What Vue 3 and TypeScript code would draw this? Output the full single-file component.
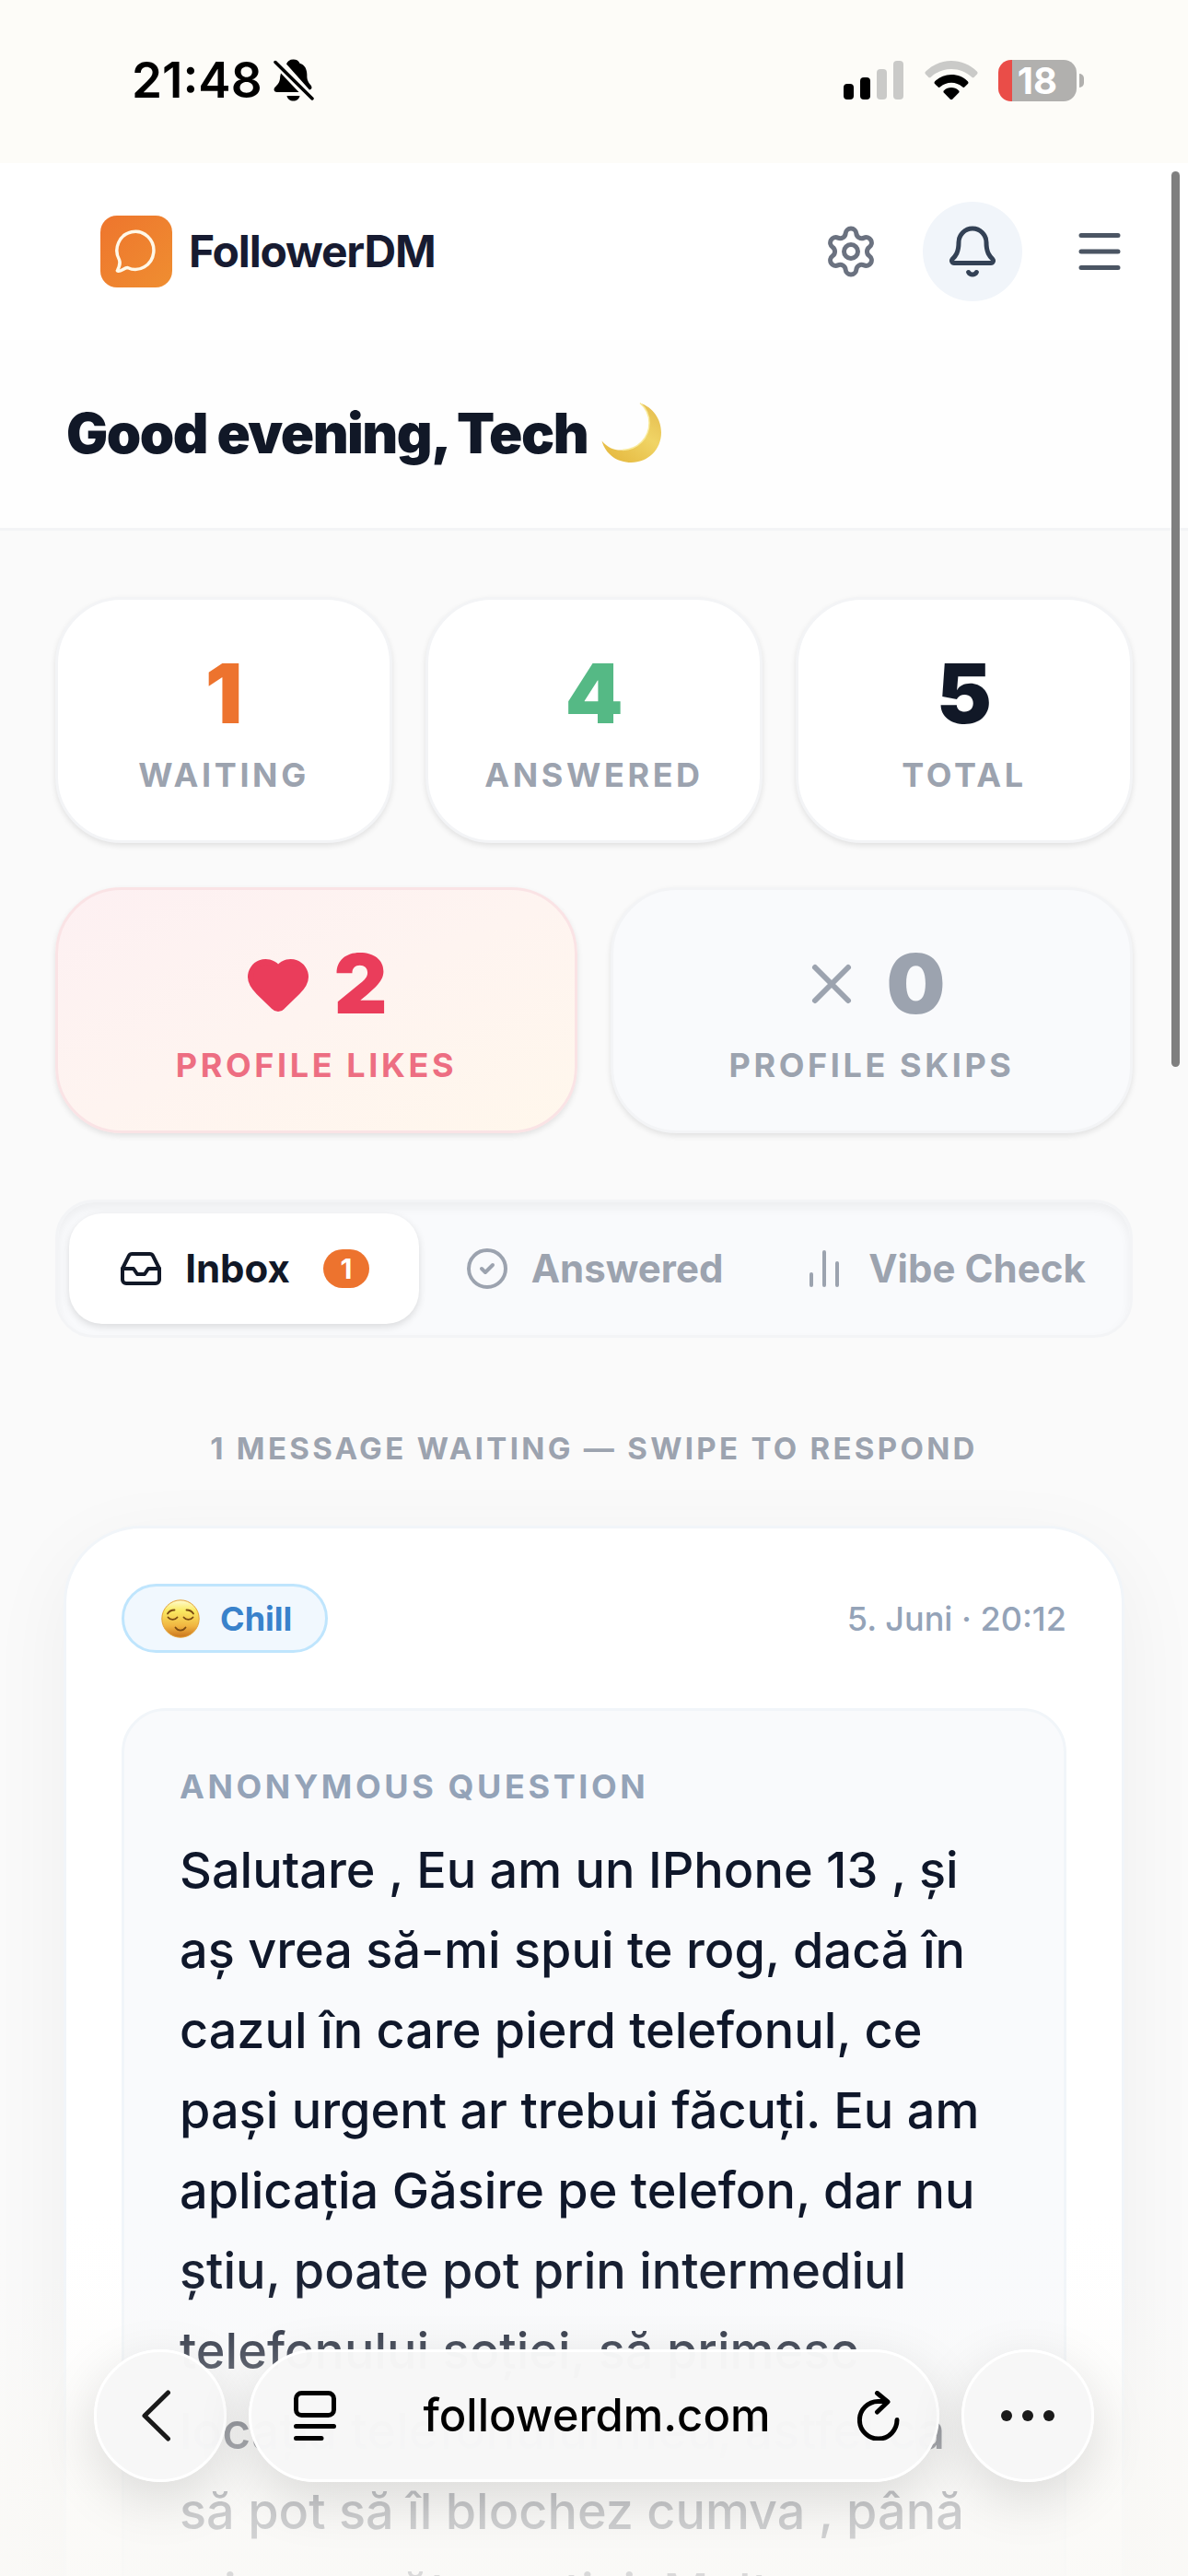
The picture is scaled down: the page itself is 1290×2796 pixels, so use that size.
<script setup lang="ts">
import { ref } from 'vue'

interface Stat {
  value: number
  label: string
  tone: string
}

const stats: Stat[] = [
  { value: 1, label: 'Waiting', tone: 'orange' },
  { value: 4, label: 'Answered', tone: 'green' },
  { value: 5, label: 'Total', tone: 'ink' },
]

const messageLines: string[] = [
  'Salutare , Eu am un IPhone 13 , și',
  'aș vrea să-mi spui te rog, dacă în',
  'cazul în care pierd telefonul, ce',
  'pași urgent ar trebui făcuți. Eu am',
  'aplicația Găsire pe telefon, dar nu',
  'știu, poate pot prin intermediul',
  'telefonului soției, să primesc',
  'locația telefonului meu, astfel ca',
  'să pot să îl blochez cumva , până',
  'mi-o va către soției. Mult',
]

const activeTab = ref('inbox')
</script>

<template>
  <div class="screen">
    <header class="status">
      <div class="status-left">
        <span class="clock">21:48</span>
        <svg class="silent" viewBox="0 0 44 46" aria-hidden="true">
          <path d="M21.500 0.500c-4 0-6.500 2-7.500 5L39 33.500c1.800-0.200 2.800-1.500 2.400-3.200-0.800-3-4.400-4-5-10.300C36.800 11 34 6.500 28.500 4.800 27.500 2 25 0.500 21.500 0.500z" />
          <path d="M8 15.500L27.500 36H4c-3.500 0-4.400-3-2.500-5.200C4.500 27.500 7 26 7.200 19z" />
          <path d="M14.500 40h14c-0.600 3.500-3.400 5.500-7 5.500s-6.400-2-7-5.500z" />
          <path class="slash" d="M2 3.500L42 43" />
        </svg>
      </div>
      <div class="status-right">
        <svg class="signal" viewBox="0 0 66 42" aria-hidden="true">
          <rect x="0" y="25" width="11" height="17" rx="4" />
          <rect x="18" y="18" width="11" height="24" rx="4" />
          <rect class="dim" x="36" y="9" width="11" height="33" rx="4" />
          <rect class="dim" x="54" y="0" width="11" height="42" rx="4" />
        </svg>
        <svg class="wifi" viewBox="0 0 58 42" aria-hidden="true">
          <path class="dim" d="M1.200 11.500C9 4 18.500 0 29 0s20 4 27.800 11.500c1 1 1 2 .2 2.900l-3.200 3.400c-.7.700-1.700.7-2.500 0C45 12 37.500 9 29 9S13 12 6.700 17.800c-.8.700-1.800.7-2.500 0L1 14.400c-.8-.9-.8-1.900.2-2.900z" />
          <path d="M11.200 22.200C16 17.500 22 15 29 15s13 2.500 17.800 7.200c.9.900.9 1.900.1 2.700l-3.300 3.400c-.8.800-1.700.8-2.600 0C37.500 25.300 33.500 23.700 29 23.700s-8.500 1.600-12 4.600c-.9.800-1.800.8-2.600 0l-3.300-3.400c-.8-.8-.8-1.800.1-2.700z" />
          <path d="M21 32.200c2.200-2 5-3.200 8-3.200s5.800 1.200 8 3.200c.8.700.8 1.700 0 2.500l-6.600 6.700c-.9.900-1.900.9-2.800 0L21 34.700c-.8-.8-.8-1.800 0-2.500z" />
        </svg>
        <div class="battery">
          <div class="battery-body"><span>18</span></div>
          <div class="battery-nub"></div>
        </div>
      </div>
    </header>

    <main class="page">
      <div class="topbar">
        <a class="brand" href="#">
          <svg class="logo" viewBox="0 0 78 78" aria-hidden="true">
            <defs>
              <linearGradient id="logoFill" x1="0" y1="0" x2="1" y2="1">
                <stop offset="0" stop-color="#ee752d" />
                <stop offset="1" stop-color="#ef8e31" />
              </linearGradient>
            </defs>
            <rect width="78" height="78" rx="18" fill="url(#logoFill)" />
            <path d="M18.500 59.500c2-4 3.500-7 2-11.500A20 20.500 0 1 1 29.500 56.500c-3.500 0-6.500 4-10 3.800-1 0-1.300-.4-1-.8z" fill="none" stroke="#fff8e8" stroke-width="3.500" stroke-linejoin="round" />
          </svg>
          <span class="wordmark">FollowerDM</span>
        </a>
        <nav class="actions">
          <button type="button" class="icon-btn gray" aria-label="Settings">
            <svg class="icon i60" viewBox="0 0 24 24">
              <path d="M9.671 4.136a2.340 2.340 0 0 1 4.659 0 2.340 2.340 0 0 0 3.319 1.915 2.340 2.340 0 0 1 2.330 4.033 2.340 2.340 0 0 0 0 3.831 2.340 2.340 0 0 1-2.330 4.033 2.340 2.340 0 0 0-3.319 1.915 2.340 2.340 0 0 1-4.659 0 2.340 2.340 0 0 0-3.320-1.915 2.340 2.340 0 0 1-2.330-4.033 2.340 2.340 0 0 0 0-3.831A2.340 2.340 0 0 1 6.350 6.051a2.340 2.340 0 0 0 3.319-1.915" />
              <circle cx="12" cy="12" r="3" />
            </svg>
          </button>
          <button type="button" class="icon-btn round" aria-label="Notifications">
            <svg class="icon i60" viewBox="0 0 24 24">
              <path d="M10.268 21a2 2 0 0 0 3.464 0" />
              <path d="M3.262 15.326A1 1 0 0 0 4 17h16a1 1 0 0 0 .74-1.673C19.410 13.956 18 12.499 18 8A6 6 0 0 0 6 8c0 4.499-1.411 5.956-2.738 7.326" />
            </svg>
          </button>
          <button type="button" class="icon-btn menu" aria-label="Menu">
            <svg class="icon i60" viewBox="0 0 24 24">
              <path d="M4 5h16M4 12h16M4 19h16" />
            </svg>
          </button>
        </nav>
      </div>

      <section class="greeting">
        <h1>Good evening, Tech</h1>
        <svg class="moon" viewBox="0 0 66 66" role="img" aria-label="Moon">
          <defs>
            <linearGradient id="moonFill" x1="1" y1="0" x2="0.300" y2="1">
              <stop offset="0" stop-color="#e3b94c" />
              <stop offset="0.500" stop-color="#f0d465" />
              <stop offset="1" stop-color="#e6bb43" />
            </linearGradient>
          </defs>
          <path d="M42 0.500C56 5 65 18 65 32.500 65 51 50.500 65 32.500 65 17 65 4.500 56 0.500 41.500 7 49 14 52 23 51.500 40 51 52 38 52 22 52 13.500 48.500 6 42 0.500z" fill="url(#moonFill)" />
          <path d="M42 0.500C48.500 6 52 13.500 52 22 52 38 40 51 23 51.500" fill="none" stroke="#f9ea9a" stroke-width="1.500" />
        </svg>
      </section>

      <section class="content">
        <div class="stats three">
          <article v-for="s in stats" :key="s.label" class="stat">
            <div class="value" :class="s.tone">{{ s.value }}</div>
            <div class="label">{{ s.label }}</div>
          </article>
        </div>
        <div class="stats two">
          <article class="stat likes">
            <div class="value">
              <svg class="icon heart" viewBox="0 0 24 24" aria-hidden="true">
                <path d="M2 9.500a5.500 5.500 0 0 1 9.591-3.676.56.56 0 0 0 .818 0A5.490 5.490 0 0 1 22 9.500c0 2.290-1.500 4-3 5.500l-5.492 5.313a2 2 0 0 1-3 .019L5 15c-1.500-1.500-3-3.200-3-5.500" />
              </svg>
              <span>2</span>
            </div>
            <div class="label">Profile likes</div>
          </article>
          <article class="stat skips">
            <div class="value">
              <svg class="icon" viewBox="0 0 24 24" aria-hidden="true"><path d="M18 6 6 18M6 6l12 12" /></svg>
              <span>0</span>
            </div>
            <div class="label">Profile skips</div>
          </article>
        </div>

        <div class="tabs" role="tablist">
          <button type="button" role="tab" class="tab" :class="{ active: activeTab === 'inbox' }" @click="activeTab = 'inbox'">
            <svg class="icon" viewBox="0 0 24 24" aria-hidden="true">
              <path d="M22 12h-6l-2 3h-4l-2-3H2" />
              <path d="M5.450 5.110 2 12v6a2 2 0 0 0 2 2h16a2 2 0 0 0 2-2v-6l-3.450-6.890A2 2 0 0 0 16.760 4H7.240a2 2 0 0 0-1.790 1.110z" />
            </svg>
            <span>Inbox</span>
            <span class="badge">1</span>
          </button>
          <button type="button" role="tab" class="tab" :class="{ active: activeTab === 'answered' }" @click="activeTab = 'answered'">
            <svg class="icon" viewBox="0 0 24 24" aria-hidden="true"><circle cx="12" cy="12" r="10" /><path d="m9 12 2 2 4-4" /></svg>
            <span>Answered</span>
          </button>
          <button type="button" role="tab" class="tab" :class="{ active: activeTab === 'vibe' }" @click="activeTab = 'vibe'">
            <svg class="icon" viewBox="0 0 24 24" aria-hidden="true"><path d="M5 21v-6M12 21V3M19 21V9" /></svg>
            <span>Vibe Check</span>
          </button>
        </div>

        <p class="hint">1 message waiting — swipe to respond</p>

        <article class="card">
          <div class="card-head">
            <span class="mood">
              <svg class="face" viewBox="0 0 42 42" aria-hidden="true">
                <defs>
                  <linearGradient id="faceFill" x1="0" y1="0" x2="0" y2="1">
                    <stop offset="0" stop-color="#fffbd0" />
                    <stop offset="0.280" stop-color="#faea62" />
                    <stop offset="0.700" stop-color="#f0b440" />
                    <stop offset="1" stop-color="#c9741f" />
                  </linearGradient>
                </defs>
                <circle cx="21" cy="21" r="20.200" fill="url(#faceFill)" stroke="#e4a336" stroke-width="1" />
                <g fill="none" stroke="#7a4a12" stroke-width="1.800" stroke-linecap="round">
                  <path d="M7 15.500c1.500-2.500 4-4 7.500-4" />
                  <path d="M35 15.500c-1.500-2.500-4-4-7.500-4" />
                  <path d="M7.500 19.500c2.500 3.200 7.500 3.200 10 0" />
                  <path d="M24.500 19.500c2.500 3.200 7.500 3.200 10 0" />
                  <path d="M15.500 30.500c3 4.200 8 4.200 11 0" />
                </g>
              </svg>
              Chill
            </span>
            <time>5. Juni · 20:12</time>
          </div>
          <div class="question">
            <h2>Anonymous question</h2>
            <p><span v-for="line in messageLines" :key="line">{{ line }}</span></p>
          </div>
        </article>
      </section>
    </main>

    <div class="scroll-thumb"></div>
    <div class="fade"></div>

    <nav class="browser">
      <button type="button" class="pill circle back" aria-label="Back">
        <svg class="chevron" viewBox="0 0 32 56"><path d="M28.500 3L3 28l25.500 25" /></svg>
      </button>
      <div class="pill address">
        <button type="button" class="plain" aria-label="Page menu">
          <svg class="reader" viewBox="0 0 46 54"><rect x="2.500" y="2.500" width="41" height="24" rx="6" /><path d="M2.500 38.500h41M2.500 51.500h27.500" /></svg>
        </button>
        <a href="#" class="url">followerdm.com</a>
        <button type="button" class="plain" aria-label="Reload">
          <svg class="reload" viewBox="0 0 46 54"><path d="M43 31.500A20.300 20.300 0 1 1 22.500 11.500H32M21.500 2.500l11.500 9.500-11.500 11" /></svg>
        </button>
      </div>
      <button type="button" class="pill circle" aria-label="More">
        <svg class="dots" viewBox="0 0 58 12"><circle cx="6" cy="6" r="6" /><circle cx="29" cy="6" r="6" /><circle cx="52" cy="6" r="6" /></svg>
      </button>
    </nav>
  </div>
</template>

<style>
body {
  margin: 0;
  background: #fafafa;
}
</style>

<style scoped>
* {
  box-sizing: border-box;
}

.screen {
  position: relative;
  display: flex;
  flex-direction: column;
  height: 100vh;
  overflow: hidden;
  background: #fafafa;
  color: #0f172a;
  font-family: Inter, "Liberation Sans", sans-serif;
}

button {
  padding: 0;
  border: 0;
  background: none;
  color: inherit;
  font: inherit;
  cursor: pointer;
}

a {
  color: inherit;
  text-decoration: none;
}

svg {
  display: block;
  flex: none;
}

.icon {
  width: 48px;
  height: 48px;
  fill: none;
  stroke: currentColor;
  stroke-width: 2;
  stroke-linecap: round;
  stroke-linejoin: round;
}

.i60 {
  width: 60px;
  height: 60px;
}

/* status bar */
.status {
  display: flex;
  flex: none;
  align-items: center;
  justify-content: space-between;
  height: 177px;
  padding: 0 113px 3px 143px;
  background: #fdfcf8;
  color: #000;
}

.status-left,
.status-right {
  display: flex;
  align-items: center;
}

.status-left {
  gap: 12px;
}

.status-right {
  gap: 22px;
}

.clock {
  font-size: 53px;
  font-weight: 600;
  line-height: 60px;
}

.silent {
  width: 44px;
  height: 46px;
}

.slash {
  stroke: #000;
  stroke-width: 3.5;
  stroke-linecap: round;
}

.signal {
  width: 66px;
  height: 42px;
}

.wifi {
  width: 58px;
  height: 42px;
}

.dim {
  fill: #cacac8;
}

.battery {
  display: flex;
  align-items: center;
  gap: 3px;
}

.battery-body {
  width: 85px;
  height: 45px;
  border-radius: 14px;
  background: linear-gradient(90deg, #ea4d48 18%, #b1b0ae 18%);
  color: #fff;
  font-size: 40px;
  font-weight: 700;
  line-height: 45px;
  text-align: center;
}

.battery-nub {
  width: 5px;
  height: 15px;
  border-radius: 0 6px 6px 0;
  background: #b1b0ae;
}

/* page */
.page {
  flex: 1;
  min-height: 0;
  overflow: hidden;
}

.topbar {
  display: flex;
  align-items: center;
  justify-content: space-between;
  height: 192px;
  padding: 0 66px 0 109px;
  background: #fff;
}

.brand {
  display: flex;
  align-items: center;
  gap: 18px;
}

.logo {
  width: 78px;
  height: 78px;
}

.wordmark {
  color: #171b31;
  font-size: 48px;
  font-weight: 700;
  line-height: 60px;
  letter-spacing: -0.025em;
}

.actions {
  display: flex;
  align-items: center;
  gap: 48px;
}

.icon-btn {
  display: flex;
  align-items: center;
  justify-content: center;
}

.gray {
  color: #6b7280;
}

.round {
  width: 108px;
  height: 108px;
  border-radius: 50%;
  background: #f1f5fa;
  color: #334155;
}

.menu {
  margin-left: 6px;
  color: #4b5563;
}

.greeting {
  display: flex;
  align-items: center;
  gap: 15px;
  height: 207px;
  padding: 0 72px 3px;
  border-bottom: 3px solid #f3f4f6;
  background: #fefefe;
}

h1 {
  margin: 0;
  color: #111827;
  font-size: 60px;
  font-weight: 900;
  line-height: 72px;
  letter-spacing: -0.025em;
}

.moon {
  width: 66px;
  height: 66px;
}

.content {
  padding: 72px 60px 0;
}

.stats {
  display: grid;
  gap: 36px;
  margin-bottom: 48px;
}

.three {
  grid-template-columns: repeat(3, 1fr);
}

.two {
  grid-template-columns: repeat(2, 1fr);
  margin-bottom: 72px;
}

.stat {
  padding: 48px 0;
  border: 3px solid #f3f4f6;
  border-radius: 72px;
  background: #fff;
  box-shadow: 0 3px 6px rgba(0, 0, 0, 0.1);
  text-align: center;
}

.value {
  display: flex;
  align-items: center;
  justify-content: center;
  gap: 24px;
  font-size: 90px;
  font-weight: 900;
  line-height: 108px;
}

.value .icon {
  width: 72px;
  height: 72px;
}

.heart {
  fill: currentColor;
}

.orange {
  color: #ed732e;
}

.green {
  color: #55b985;
}

.ink {
  color: #111827;
}

.label {
  margin-top: 12px;
  color: #9ca3af;
  font-size: 36px;
  font-weight: 700;
  line-height: 45px;
  letter-spacing: 0.1em;
  text-transform: uppercase;
}

.likes {
  border-color: #fae3e5;
  background: linear-gradient(to bottom right, #fdf0f2, #fef4f0 50%, #fff7ec);
  color: #ea3d5b;
}

.likes .label {
  color: #ed6e82;
}

.skips {
  background: #f9fafc;
  color: #9ca3af;
}

/* tabs */
.tabs {
  display: grid;
  grid-template-columns: repeat(3, 1fr);
  padding: 12px;
  border: 3px solid #f3f4f6;
  border-radius: 42px;
  background: #f9fafc;
  box-shadow: inset 0 6px 12px rgba(0, 0, 0, 0.05);
}

.tab {
  display: flex;
  align-items: center;
  justify-content: center;
  gap: 24px;
  height: 120px;
  border-radius: 36px;
  color: #9ca3af;
  font-size: 42px;
  font-weight: 700;
  line-height: 60px;
  white-space: nowrap;
}

.active {
  background: #fff;
  box-shadow: 0 3px 9px rgba(0, 0, 0, 0.13);
  color: #111827;
}

.badge {
  width: 50px;
  height: 42px;
  margin-left: 12px;
  border-radius: 21px;
  background: #ed732e;
  color: #fff;
  font-size: 30px;
  font-weight: 700;
  line-height: 42px;
  text-align: center;
}

.hint {
  margin: 96px 0 60px;
  color: #9ca3af;
  font-size: 33px;
  font-weight: 700;
  line-height: 48px;
  letter-spacing: 0.1em;
  text-align: center;
  text-transform: uppercase;
}

/* message card */
.card {
  margin: 0 9px;
  padding: 60px;
  border: 3px solid #f1f5f9;
  border-radius: 84px;
  background: #fff;
  box-shadow: 0 24px 90px rgba(0, 0, 0, 0.05);
}

.card-head {
  display: flex;
  align-items: center;
  justify-content: space-between;
  margin-bottom: 60px;
}

.mood {
  display: flex;
  align-items: center;
  gap: 22px;
  height: 75px;
  padding: 0 36px 0 40px;
  border: 3px solid #bfe5fd;
  border-radius: 38px;
  background: #f1f8fe;
  color: #3982cb;
  font-size: 36px;
  font-weight: 700;
}

.face {
  width: 42px;
  height: 42px;
}

time {
  color: #94a3b8;
  font-size: 36px;
  font-weight: 500;
}

.question {
  padding: 60px;
  border: 3px solid #f1f5f9;
  border-radius: 48px;
  background: #f9fafc;
}

h2 {
  margin: 0 0 24px;
  color: #94a3b8;
  font-size: 36px;
  font-weight: 700;
  line-height: 45px;
  letter-spacing: 0.1em;
  text-transform: uppercase;
}

.question p {
  margin: 0;
  font-size: 54px;
  font-weight: 500;
  line-height: 87px;
}

.question span {
  display: block;
  white-space: nowrap;
}

/* browser chrome laid over the page */
.scroll-thumb {
  position: absolute;
  top: 186px;
  right: 9px;
  width: 9px;
  height: 972px;
  border-radius: 5px;
  background: #7f7f7f;
}

.fade {
  position: absolute;
  right: 0;
  bottom: 0;
  left: 0;
  height: 396px;
  background: linear-gradient(
    rgba(250, 249, 246, 0),
    rgba(250, 249, 246, 0.06) 22%,
    rgba(250, 249, 246, 0.3) 40%,
    rgba(250, 249, 246, 0.62) 60%,
    rgba(250, 249, 246, 0.8) 83%,
    rgba(250, 249, 246, 0.86)
  );
}

.browser {
  position: absolute;
  right: 102px;
  bottom: 102px;
  left: 102px;
  display: flex;
  gap: 24px;
}

.pill {
  display: flex;
  align-items: center;
  height: 144px;
  border: 3px solid #fff;
  border-radius: 72px;
  background: rgba(247, 247, 247, 0.98);
  box-shadow: 0 18px 60px rgba(0, 0, 0, 0.13);
  color: #1a1a1a;
}

.circle {
  flex: none;
  justify-content: center;
  width: 144px;
}

.back {
  padding-right: 9px;
}

.address {
  flex: 1;
  justify-content: space-between;
  padding: 0 40px 0 46px;
  color: #000;
}

.url {
  font-size: 49px;
  font-weight: 500;
  line-height: 60px;
}

.chevron,
.reader,
.reload {
  fill: none;
  stroke: currentColor;
  stroke-width: 5;
  stroke-linecap: round;
  stroke-linejoin: round;
}

.chevron {
  width: 32px;
  height: 56px;
}

.reader,
.reload {
  width: 46px;
  height: 54px;
}

.dots {
  width: 58px;
  height: 12px;
  fill: currentColor;
}
</style>
